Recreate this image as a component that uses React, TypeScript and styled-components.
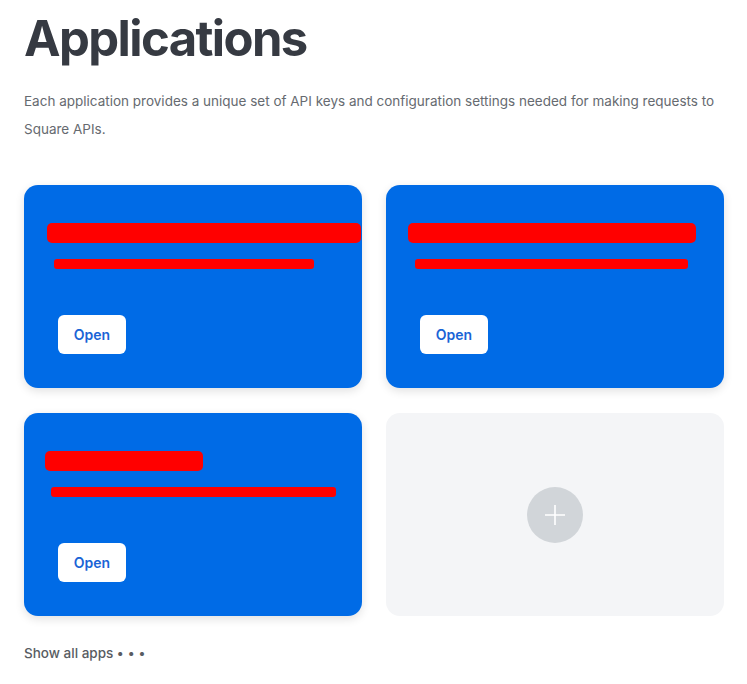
import React from 'react';
import styled, { createGlobalStyle } from 'styled-components';

const GlobalStyle = createGlobalStyle`
    html, body {
        margin: 0;
        padding: 0;
        background: #ffffff;
    }
    body {
        font-family: Inter, 'Liberation Sans', Arial, sans-serif;
        -webkit-font-smoothing: antialiased;
    }
`;

type App = {
    id: string;
    title: { left: number; width: number };
    sub: { left: number; width: number };
};

const apps: Array<App> = [
    { id: 'a', title: { left: 23, width: 314 }, sub: { left: 30, width: 260 } },
    { id: 'b', title: { left: 22, width: 288 }, sub: { left: 29, width: 273 } },
    { id: 'c', title: { left: 21, width: 158 }, sub: { left: 27, width: 285 } },
];

const PlusIcon = () => (
    <svg width="22" height="22" viewBox="0 0 22 22" fill="none">
        <path d="M11 1v20M1 11h20" stroke="#ffffff" strokeWidth="1.6" />
    </svg>
);

export default function ApplicationsPage() {
    return (
        <>
            <GlobalStyle />
            <Page>
                <Title>Applications</Title>
                <Intro>
                    Each application provides a unique set of API keys and configuration settings needed for making
                    requests to Square APIs.
                </Intro>
                <Grid>
                    {apps.map((app) => (
                        <AppCard key={app.id}>
                            <TitleBar $left={app.title.left} $width={app.title.width} />
                            <SubBar $left={app.sub.left} $width={app.sub.width} />
                            <OpenButton>Open</OpenButton>
                        </AppCard>
                    ))}
                    <AddCard>
                        <AddCircle>
                            <PlusIcon />
                        </AddCircle>
                    </AddCard>
                </Grid>
                <ShowAll>
                    Show all apps <Dots>• • •</Dots>
                </ShowAll>
            </Page>
        </>
    );
}

const Page = styled.div`
    padding: 9px 23px 0 24px;
    color: #373b43;
`;

const Title = styled.h1`
    margin: 0;
    font-size: 49px;
    line-height: 60px;
    font-weight: 700;
    letter-spacing: -1.6px;
    color: #363a42;
`;

const Intro = styled.p`
    margin: 18px 0 0;
    font-size: 13.5px;
    line-height: 28px;
    color: #666a70;
    max-width: 700px;
`;

const Grid = styled.div`
    display: grid;
    grid-template-columns: 338px 338px;
    grid-auto-rows: 203px;
    column-gap: 24px;
    row-gap: 25px;
    margin-top: 42px;
`;

const AppCard = styled.div`
    display: flex;
    flex-direction: column;
    align-items: flex-start;
    padding-top: 38px;
    background: #006be6;
    border-radius: 14px;
    box-shadow: 0 3px 10px rgba(0, 0, 0, 0.12);
    box-sizing: border-box;
`;

const TitleBar = styled.div<{ $left: number; $width: number }>`
    margin-left: ${({ $left }) => $left}px;
    width: ${({ $width }) => $width}px;
    height: 20px;
    border-radius: 5px;
    background: #ff0000;
`;

const SubBar = styled.div<{ $left: number; $width: number }>`
    margin-top: 16px;
    margin-left: ${({ $left }) => $left}px;
    width: ${({ $width }) => $width}px;
    height: 10px;
    border-radius: 3px;
    background: #ff0000;
`;

const OpenButton = styled.button`
    margin: 46px 0 0 34px;
    width: 68px;
    height: 39px;
    border: none;
    border-radius: 6px;
    background: #ffffff;
    color: #1a64d6;
    font-family: Inter, 'Liberation Sans', Arial, sans-serif;
    font-size: 14px;
    font-weight: 600;
    cursor: pointer;
`;

const AddCard = styled.div`
    display: flex;
    align-items: center;
    justify-content: center;
    background: #f4f5f7;
    border-radius: 14px;
`;

const AddCircle = styled.div`
    display: flex;
    align-items: center;
    justify-content: center;
    width: 56px;
    height: 56px;
    border-radius: 50%;
    background: #d1d5d9;
`;

const ShowAll = styled.div`
    margin-top: 27px;
    font-size: 13.5px;
    line-height: 20px;
    font-weight: 500;
    color: #585c62;
`;

const Dots = styled.span`
    font-size: 13px;
    letter-spacing: 0.2px;
`;
